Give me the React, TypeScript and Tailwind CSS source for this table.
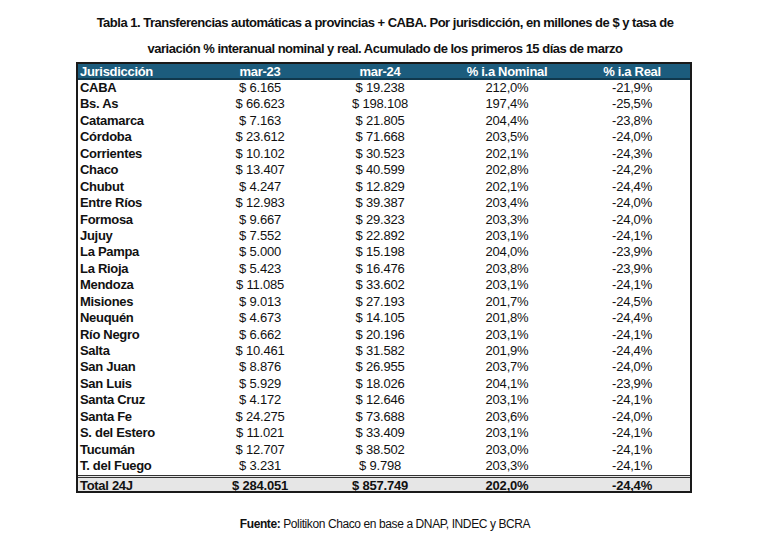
const rows: [string, string, string, string, string][] = [
  ["CABA", "$ 6.165", "$ 19.238", "212,0%", "-21,9%"],
  ["Bs. As", "$ 66.623", "$ 198.108", "197,4%", "-25,5%"],
  ["Catamarca", "$ 7.163", "$ 21.805", "204,4%", "-23,8%"],
  ["Córdoba", "$ 23.612", "$ 71.668", "203,5%", "-24,0%"],
  ["Corrientes", "$ 10.102", "$ 30.523", "202,1%", "-24,3%"],
  ["Chaco", "$ 13.407", "$ 40.599", "202,8%", "-24,2%"],
  ["Chubut", "$ 4.247", "$ 12.829", "202,1%", "-24,4%"],
  ["Entre Ríos", "$ 12.983", "$ 39.387", "203,4%", "-24,0%"],
  ["Formosa", "$ 9.667", "$ 29.323", "203,3%", "-24,0%"],
  ["Jujuy", "$ 7.552", "$ 22.892", "203,1%", "-24,1%"],
  ["La Pampa", "$ 5.000", "$ 15.198", "204,0%", "-23,9%"],
  ["La Rioja", "$ 5.423", "$ 16.476", "203,8%", "-23,9%"],
  ["Mendoza", "$ 11.085", "$ 33.602", "203,1%", "-24,1%"],
  ["Misiones", "$ 9.013", "$ 27.193", "201,7%", "-24,5%"],
  ["Neuquén", "$ 4.673", "$ 14.105", "201,8%", "-24,4%"],
  ["Río Negro", "$ 6.662", "$ 20.196", "203,1%", "-24,1%"],
  ["Salta", "$ 10.461", "$ 31.582", "201,9%", "-24,4%"],
  ["San Juan", "$ 8.876", "$ 26.955", "203,7%", "-24,0%"],
  ["San Luis", "$ 5.929", "$ 18.026", "204,1%", "-23,9%"],
  ["Santa Cruz", "$ 4.172", "$ 12.646", "203,1%", "-24,1%"],
  ["Santa Fe", "$ 24.275", "$ 73.688", "203,6%", "-24,0%"],
  ["S. del Estero", "$ 11.021", "$ 33.409", "203,1%", "-24,1%"],
  ["Tucumán", "$ 12.707", "$ 38.502", "203,0%", "-24,1%"],
  ["T. del Fuego", "$ 3.231", "$ 9.798", "203,3%", "-24,1%"],
];

const cols = "grid grid-cols-[122px_120px_120px_134px_116px]";

const App = () => {
  return (
    <div className="w-[770px] h-[546px] bg-white text-[#111] font-['Liberation_Sans',Arial,sans-serif]">
      {/* titulo */}
      <div className="flex flex-col items-center pt-[10px] text-[13px] font-bold leading-[26px] tracking-[-0.5px]">
        <span>
          Tabla 1. Transferencias automáticas a provincias + CABA. Por jurisdicción, en millones de $ y tasa de
        </span>
        <span>
          variación % interanual nominal y real. Acumulado de los primeros 15 días de marzo
        </span>
      </div>
      {/* tabla */}
      <div className="ml-[76px] w-[616px] border-2 border-[#1a1a1a] text-[13px] tracking-[-0.2px]">
        <div className={`${cols} h-[16px] bg-[#1c5c7d] text-white font-bold leading-[16px] border-b-2 border-[#10384d] tracking-[-0.3px]`}>
          <span className="pl-[2px]">Jurisdicción</span>
          <span className="text-center">mar-23</span>
          <span className="text-center">mar-24</span>
          <span className="text-center">% i.a Nominal</span>
          <span className="text-center">% i.a Real</span>
        </div>
        {rows.map((r) => (
          <div key={r[0]} className={`${cols} h-[16.45px] leading-[16.45px]`}>
            <span className="pl-[2px] font-bold tracking-[-0.3px]">{r[0]}</span>
            <span className="text-center">{r[1]}</span>
            <span className="text-center">{r[2]}</span>
            <span className="text-center">{r[3]}</span>
            <span className="text-center">{r[4]}</span>
          </div>
        ))}
        <div className={`${cols} h-[16px] leading-[16px] bg-[#e6e6e6] font-bold border-t-[3px] border-double border-[#333]`}>
          <span className="pl-[2px] tracking-[-0.3px]">Total 24J</span>
          <span className="text-center">$ 284.051</span>
          <span className="text-center">$ 857.749</span>
          <span className="text-center">202,0%</span>
          <span className="text-center">-24,4%</span>
        </div>
      </div>
      {/* fuente */}
      <div className="mt-[22px] text-center text-[12px] tracking-[-0.4px]">
        <span className="font-bold">Fuente:</span> Politikon Chaco en base a DNAP, INDEC y BCRA
      </div>
    </div>
  );
};

export default App;
